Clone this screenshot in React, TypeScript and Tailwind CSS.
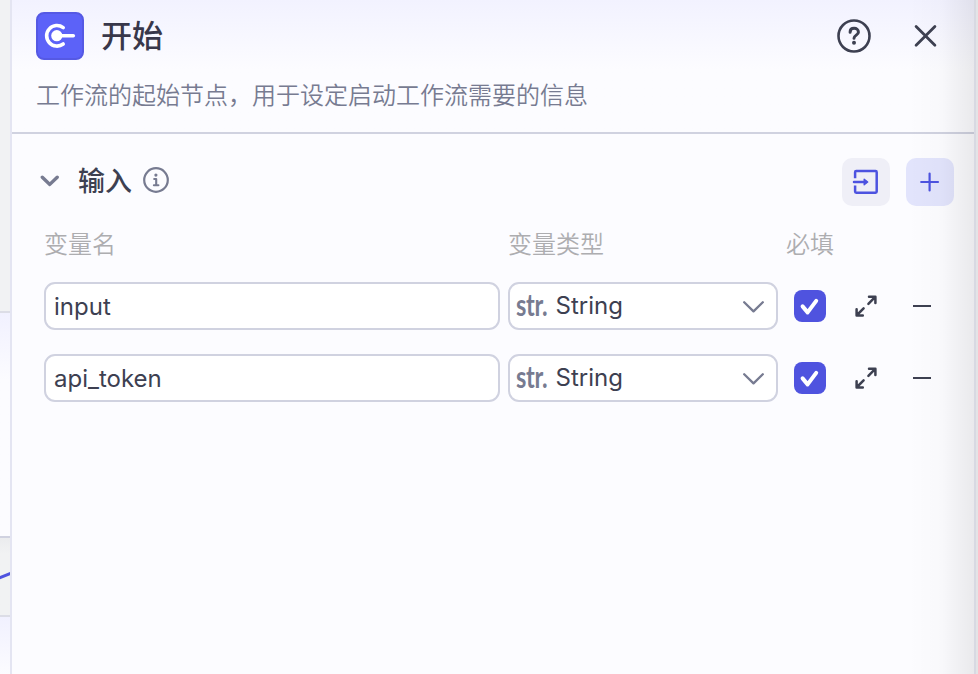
import React from "react";

const latin = "font-['Inter','Noto_Sans_CJK_SC',sans-serif]";
const cjk = "font-['Noto_Sans_CJK_SC',sans-serif]";

function StartIcon() {
  return (
    <div className="flex size-12 shrink-0 items-center justify-center rounded-lg border-2 border-[#5559e4] bg-[#5c62f8]">
      <svg width="48" height="48" viewBox="0 0 48 48" className="shrink-0" fill="none" stroke="#fff" strokeLinecap="round">
        <path d="M27.2 15.6A10.3 10.3 0 1 0 27.2 32" strokeWidth="3.6" />
        <circle cx="20.8" cy="23.7" r="5.6" fill="#fff" stroke="none" />
        <path d="M21 23.7H37.3" strokeWidth="3.6" />
      </svg>
    </div>
  );
}

function HelpIcon() {
  return (
    <svg width="36" height="36" viewBox="0 0 36 36" fill="none" stroke="#3d4051" strokeLinecap="round" strokeLinejoin="round">
      <circle cx="18" cy="18" r="15.5" strokeWidth="2.6" />
      <path d="M14.1 14.2C14.1 11.6 15.7 10.3 18.1 10.3S22.4 11.8 22.4 14.2C22.4 17.1 18 17.2 18 20.3" strokeWidth="3" />
      <circle cx="18" cy="24.8" r="2" fill="#3d4051" stroke="none" />
    </svg>
  );
}

function CloseIcon() {
  return (
    <svg width="24" height="24" viewBox="0 0 24 24" fill="none" stroke="#3d4051" strokeWidth="2.8" strokeLinecap="round">
      <path d="M2.1 2.5L20.9 21.3M20.9 2.5L2.1 21.3" />
    </svg>
  );
}

function InfoIcon() {
  return (
    <svg width="26" height="26" viewBox="0 0 26 26" fill="none" stroke="#777b91" strokeLinecap="round" strokeLinejoin="round">
      <circle cx="13" cy="13" r="11.8" strokeWidth="2.2" />
      <circle cx="12.9" cy="8.1" r="1.6" fill="#777b91" stroke="none" />
      <path d="M11.2 12H13.2V18.2M10.9 18.2H15.4" strokeWidth="2.1" />
    </svg>
  );
}

function ImportIcon() {
  return (
    <svg width="28" height="26" viewBox="0 0 28 26" fill="none" stroke="#4d53e0" strokeWidth="2.5" strokeLinecap="round" strokeLinejoin="round">
      <path d="M3.1 9.2V3.2Q3.1 2.1 4.2 2.1H23.6Q24.7 2.1 24.7 3.2V22.6Q24.7 23.7 23.6 23.7H4.2Q3.1 23.7 3.1 22.6V16.6" strokeLinecap="butt" />
      <path d="M2 13H14" />
      <path d="M12.2 10.3L15.7 13L12.2 15.7Z" fill="#4d53e0" strokeWidth="1.4" />
    </svg>
  );
}

function ExpandIcon() {
  return (
    <svg width="24" height="24" viewBox="0 0 24 24" fill="none" stroke="#3d4051" strokeWidth="2.5" strokeLinecap="round" strokeLinejoin="round">
      <path d="M15 2.8H21.4V9M21 3.2L14.4 9.8" />
      <path d="M2.6 15.2V21.4H8.8M3 21L9.6 14.4" />
    </svg>
  );
}

function VariableRow({ name }: { name: string }) {
  return (
    <div className="flex h-12 items-center">
      <div className={`${latin} h-12 w-[456px] rounded-[11px] border-2 border-[#d0d2e0] bg-white pl-2 text-[24px] leading-[46px] font-[375] text-[#3d4051]`}>
        {name}
      </div>
      <div className="ml-2 flex h-12 w-[270px] items-center rounded-[11px] border-2 border-[#d0d2e0] bg-white pr-3 pl-[6px]">
        <span className="w-[39.5px] shrink-0 origin-left scale-x-[0.76] -translate-y-[2px] font-['Lato',sans-serif] text-[31px] leading-none font-bold tracking-[-0.4px] text-[#777b91]">str.</span>
        <span className={`${latin} text-[24px] leading-[44px] font-[375] text-[#3d4051]`}>String</span>
        <svg className="-mr-px ml-auto" width="22" height="14" viewBox="0 0 22 14" fill="none" stroke="#777b91" strokeWidth="2.3" strokeLinecap="round" strokeLinejoin="round">
          <path d="M1.2 3.2L10.5 12.4L19.8 3.2" />
        </svg>
      </div>
      <div className="ml-4 flex size-8 items-center justify-center rounded-lg bg-[#4f53df]">
        <svg width="32" height="32" viewBox="0 0 32 32" fill="none" stroke="#fff" strokeWidth="4" strokeLinecap="round" strokeLinejoin="round">
          <path d="M8.6 16.4L13.6 22.4L22.2 10.9" />
        </svg>
      </div>
      <div className="ml-7"><ExpandIcon /></div>
      <div className="ml-[35px] h-0.5 w-[18px] bg-[#3d4051]" />
    </div>
  );
}

export default function App() {
  return (
    <div className={`${cjk} relative flex h-[674px] w-[978px] overflow-hidden bg-[#e3e4e6]`}>
      <div className="flex w-[10px] shrink-0 flex-col bg-[#f1f2f3]">
        <div className="h-[313px] border-b-2 border-[#dcdde6]" />
        <div className="h-[225px] border-b-2 border-[#d0d2e0] bg-linear-to-b from-[#f1f1ff] to-[#fcfcff] to-30%" />
        <div className="h-[77px] bg-linear-to-b from-[#ebecee] to-[#f1f2f3] to-20%">
          <svg width="10" height="77" viewBox="0 0 10 77" fill="none" stroke="#4f53df" strokeWidth="3">
            <path d="M-1 40L11 35.2" />
          </svg>
        </div>
        <div className="flex-1 border-t-2 border-[#dcdde6] bg-linear-to-b from-[#f1f1ff] to-[#fcfcff]" />
      </div>
      <div className="w-[966px] shrink-0 border-x-2 border-l-[#e4e5f2] border-r-[#d8d9e2] bg-[#fcfcff]">
        <header className="h-[134px] border-b-2 border-[#d0d2e0] bg-linear-to-b from-[#f2f2ff] to-[#fcfcff] to-[70px] pt-3 pl-6">
          <div className="flex h-12 items-center">
            <StartIcon />
            <h1 className="mb-[5px] ml-[17px] text-[31px] leading-[43px] font-medium text-[#38374a]">开始</h1>
            <div className="mr-9 ml-auto flex items-center gap-[42px]">
              <HelpIcon />
              <CloseIcon />
            </div>
          </div>
          <p className="mt-4 text-[24px] leading-9 font-[350] text-[#777b91]">工作流的起始节点，用于设定启动工作流需要的信息</p>
        </header>
        <main className="pl-8">
          <div className="flex h-24 items-center">
            <svg className="-ml-[4px] mb-0.5" width="20" height="14" viewBox="0 0 20 14" fill="none" stroke="#777b91" strokeWidth="3.4" strokeLinecap="round" strokeLinejoin="round">
              <path d="M2.3 3.2L9.8 10.4L17.2 3.2" />
            </svg>
            <h2 className="mb-1 ml-[18px] text-[27px] leading-10 font-medium text-[#3d4051]">输入</h2>
            <div className="mb-1 ml-[11px]"><InfoIcon /></div>
            <div className="mr-5 ml-auto flex gap-4">
              <div className="flex size-12 items-center justify-center rounded-[10px] bg-[#efeff7]"><ImportIcon /></div>
              <div className="flex size-12 items-center justify-center rounded-[10px] bg-[#e2e4fc]">
                <svg width="20" height="20" viewBox="0 0 20 20" fill="none" stroke="#4d53e0" strokeWidth="2.2" strokeLinecap="round">
                  <path d="M1.2 10H18M9.6 1.6V18.4" />
                </svg>
              </div>
            </div>
          </div>
          <div className="flex h-[52px] text-[24px] leading-[26px] font-[350] text-[#adadb0]">
            <span className="w-[464px]">变量名</span>
            <span className="w-[278px]">变量类型</span>
            <span>必填</span>
          </div>
          <div className="flex flex-col gap-6">
            <VariableRow name="input" />
            <VariableRow name="api_token" />
          </div>
        </main>
      </div>
      <div className="pointer-events-none absolute inset-y-0 right-1 w-[66px] bg-linear-to-r from-black/0 via-black/[0.015] to-black/[0.075]" />
    </div>
  );
}
